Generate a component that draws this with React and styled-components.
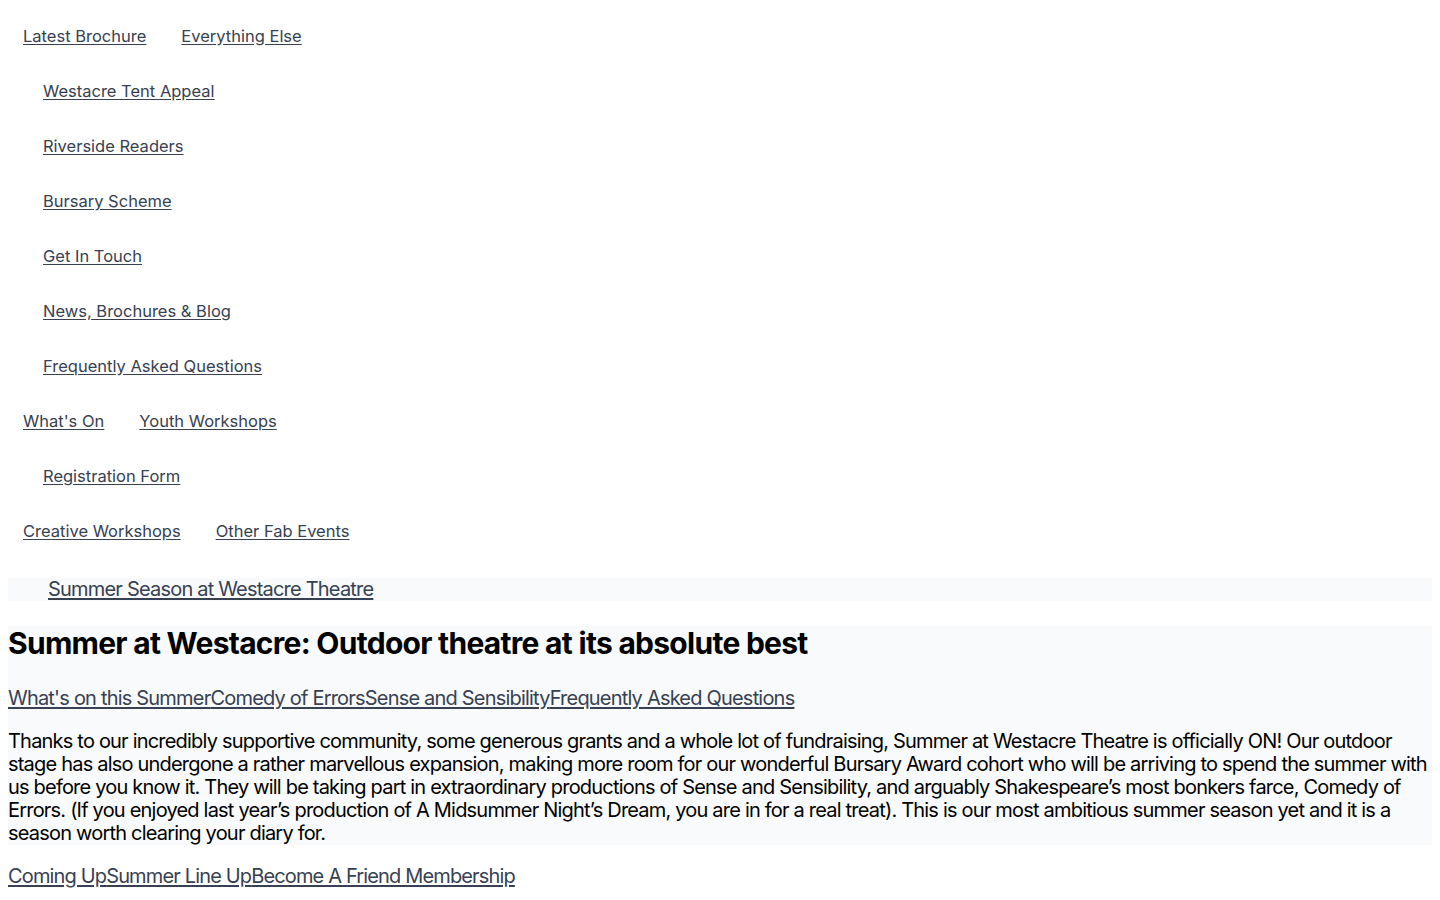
import React from 'react'
import styled, { createGlobalStyle } from 'styled-components'

const GlobalStyle = createGlobalStyle`
  body {
    margin: 8px;
    font-family: Inter, "Noto Sans", "Liberation Sans", sans-serif;
    color: #000;
    background: #fff;
  }
`

const Nav = styled.nav`
  display: flex;
  flex-direction: column;
  font-size: 16.5px;
  line-height: 24px;
`

const NavRow = styled.div`
  display: flex;
  align-items: center;
  gap: 35px;
  height: 55px;
  padding-left: ${p => (p.sub ? 35 : 15)}px;
`

const NavLink = styled.a`
  color: #374151;
  text-decoration: underline;
  text-underline-offset: 2px;
`

const SeasonBar = styled.div`
  margin-top: 20px;
  background: #f8fafc;
  padding-left: 40px;
  font-size: 20px;
  line-height: 23px;
  letter-spacing: -0.8px;
`

const BigLink = styled.a`
  color: #374151;
  text-decoration: underline;
  text-underline-offset: 2px;
`

const Section = styled.section`
  margin-top: 25px;
  background: #f8fafc;
  font-size: 20px;
  line-height: 23px;
  letter-spacing: -0.8px;
`

const Heading = styled.h1`
  margin: 0;
  font-size: 30px;
  line-height: 34.5px;
  font-weight: 700;
  letter-spacing: -0.72px;
`

const LinkRow = styled.div`
  display: flex;
  margin-top: 26px;
`

const Body = styled.p`
  margin: 20px 0 0;
`

const Footer = styled(LinkRow)`
  margin-top: 20px;
  font-size: 20px;
  line-height: 23px;
  letter-spacing: -0.85px;
`

const everythingElse = [
  'Westacre Tent Appeal',
  'Riverside Readers',
  'Bursary Scheme',
  'Get In Touch',
  'News, Brochures & Blog',
  'Frequently Asked Questions',
]

const Row = ({ items, sub }) => (
  <NavRow sub={sub}>
    {items.map(t => <NavLink href='#' key={t}>{t}</NavLink>)}
  </NavRow>
)

const App = () => (
  <>
    <GlobalStyle />
    <Nav>
      <Row items={['Latest Brochure', 'Everything Else']} />
      {everythingElse.map(t => <Row sub items={[t]} key={t} />)}
      <Row items={["What's On", 'Youth Workshops']} />
      <Row sub items={['Registration Form']} />
      <Row items={['Creative Workshops', 'Other Fab Events']} />
    </Nav>
    <SeasonBar>
      <BigLink href='#'>Summer Season at Westacre Theatre</BigLink>
    </SeasonBar>
    <Section>
      <Heading>Summer at Westacre: Outdoor theatre at its absolute best</Heading>
      <LinkRow>
        <BigLink href='#'>What's on this Summer</BigLink>
        <BigLink href='#'>Comedy of Errors</BigLink>
        <BigLink href='#'>Sense and Sensibility</BigLink>
        <BigLink href='#'>Frequently Asked Questions</BigLink>
      </LinkRow>
      <Body>
        Thanks to our incredibly supportive community, some generous grants and a whole lot of fundraising, Summer at Westacre Theatre is officially ON! Our outdoor stage has also undergone a rather marvellous expansion, making more room for our wonderful Bursary Award cohort who will be arriving to spend the summer with us before you know it. They will be taking part in extraordinary productions of Sense and Sensibility, and arguably Shakespeare’s most bonkers farce, Comedy of Errors. (If you enjoyed last year’s production of A Midsummer Night’s Dream, you are in for a real treat). This is our most ambitious summer season yet and it is a season worth clearing your diary for.
      </Body>
    </Section>
    <Footer>
      <BigLink href='#'>Coming Up</BigLink>
      <BigLink href='#'>Summer Line Up</BigLink>
      <BigLink href='#'>Become A Friend Membership</BigLink>
    </Footer>
  </>
)

export default App
